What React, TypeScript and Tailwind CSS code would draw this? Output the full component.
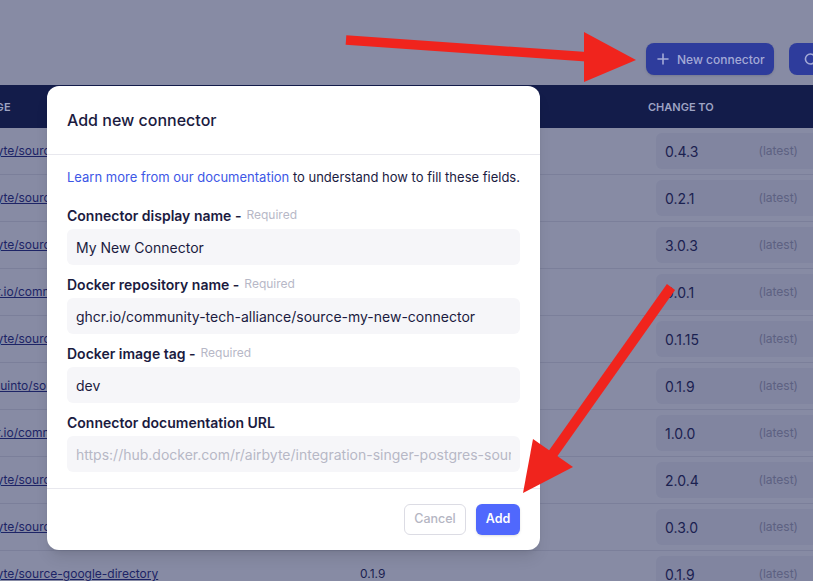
import React from "react";

const rows = [
  { repo: "airbyte/source-google-sheets", cur: "0.4.3", next: "0.4.3" },
  { repo: "airbyte/source-hubspot-crm", cur: "0.2.1", next: "0.2.1" },
  { repo: "airbyte/source-postgres-db", cur: "3.0.3", next: "3.0.3" },
  { repo: "ghcr.io/community-tech-alliance/source-x", cur: "0.0.1", next: "0.0.1" },
  { repo: "airbyte/source-stripe-api", cur: "0.1.15", next: "0.1.15" },
  { repo: "dmquinto/source-salesforce", cur: "0.1.9", next: "0.1.9" },
  { repo: "ghcr.io/community-tech-alliance/source-y", cur: "1.0.0", next: "1.0.0" },
  { repo: "airbyte/source-mailchimp", cur: "2.0.4", next: "2.0.4" },
  { repo: "airbyte/source-github-api", cur: "0.3.0", next: "0.3.0" },
  { repo: "airbyte/source-google-directory", cur: "0.1.9", next: "0.1.9" },
];

function Field({
  label,
  required,
  value,
  placeholder,
}: {
  label: string;
  required?: boolean;
  value?: string;
  placeholder?: string;
}) {
  return (
    <div className="flex flex-col gap-[4px]">
      <div className="h-[20px] flex items-center">
        <span className="text-[14px] font-semibold text-[#1b1b3f] whitespace-nowrap">
          {label}
          {required ? " -" : ""}
        </span>
        {required && <span className="text-[12px] text-[#b7b8c7] ml-[5px]">Required</span>}
      </div>
      <div className="h-[36px] rounded-[6px] bg-[#f6f6f9] flex items-center px-[9px]">
        <div className="overflow-hidden w-full">
          {value ? (
            <span className="text-[14px] text-[#1b1b3f] whitespace-nowrap">{value}</span>
          ) : (
            <span className="text-[14px] text-[#b7b8c6] whitespace-nowrap">{placeholder}</span>
          )}
        </div>
      </div>
    </div>
  );
}

export default function App() {
  return (
    <div
      className="relative w-[813px] h-[581px] overflow-hidden bg-[#878ba4]"
      style={{ fontFamily: "Inter, 'Noto Sans', sans-serif" }}
    >
      {/* top bar */}
      <div className="h-[85px] flex items-start pt-[43px] pl-[646px] gap-[15px]">
        <div className="shrink-0 w-[128px] h-[32px] rounded-[8px] bg-[#2e3c9c] flex items-center pl-[11px] gap-[8px] shadow-sm">
          <svg width="12" height="12" viewBox="0 0 12 12" className="shrink-0">
            <path d="M6 1v10M1 6h10" stroke="#a4aad6" strokeWidth="1.6" strokeLinecap="round" />
          </svg>
          <span className="text-[12px] font-medium text-[#a4aad6] whitespace-nowrap mt-[1px]">New connector</span>
        </div>
        <div className="shrink-0 w-[110px] h-[32px] rounded-[8px] bg-[#2e3c9c] flex items-center pl-[14px]">
          <svg width="14" height="14" viewBox="0 0 14 14">
            <path d="M11 3.5A5 5 0 1 0 11 10.5" stroke="#a4aad6" strokeWidth="1.6" fill="none" strokeLinecap="round" />
          </svg>
        </div>
      </div>

      {/* table */}
      <div className="ml-[-25px] w-[860px]">
        <div className="h-[43px] bg-[#131c4a] grid grid-cols-[385px_288px_1fr] items-center">
          <span className="text-[11px] font-semibold uppercase text-[#9ea3c3] tracking-[0.02em] -ml-[1px] pt-[1px]">
            Image
          </span>
          <span className="text-[11px] font-semibold uppercase text-[#9ea3c3] pt-[1px]">Current version</span>
          <span className="text-[11px] font-semibold uppercase text-[#9ea3c3] pt-[1px]">Change to</span>
        </div>
        {rows.map((r, i) => (
          <div
            key={i}
            className="h-[47px] grid grid-cols-[385px_288px_1fr] items-center border-b border-[#7b7f9a]"
          >
            <span className="text-[12px] text-[#1d2466] underline whitespace-nowrap">{r.repo}</span>
            <span className="text-[12px] text-[#1b2150]">{r.cur}</span>
            <div className="ml-[8px] w-[180px] h-[36px] rounded-[6px] bg-[#8185a0] flex items-center justify-between pl-[9px] pr-[38px]">
              <span className="text-[14px] text-[#1b2150]">{r.next}</span>
              <span className="text-[12px] text-[#5d6182]">(latest)</span>
            </div>
          </div>
        ))}
      </div>

      {/* modal */}
      <div className="absolute left-[47px] top-[86px] w-[493px] h-[464px] bg-white rounded-[12px] flex flex-col shadow-lg">
        <div className="h-[69px] shrink-0 px-[20px] flex items-center border-b border-[#e8e8ee]">
          <span className="text-[16px] font-medium text-[#1b1b3f]">Add new connector</span>
        </div>
        <div className="px-[20px] pt-[13px] flex flex-col">
          <p className="text-[13px] leading-[18px] text-[#1b1b3f] whitespace-nowrap">
            <span className="text-[#3d57e6]">Learn more from our documentation</span> to understand how to fill
            these fields.
          </p>
          <div className="mt-[19px] flex flex-col gap-[9px]">
            <Field label="Connector display name" required value="My New Connector" />
            <Field
              label="Docker repository name"
              required
              value="ghcr.io/community-tech-alliance/source-my-new-connector"
            />
            <Field label="Docker image tag" required value="dev" />
            <Field
              label="Connector documentation URL"
              placeholder="https://hub.docker.com/r/airbyte/integration-singer-postgres-source"
            />
          </div>
        </div>
        <div className="mt-auto h-[62px] border-t border-[#e8e8ee] flex items-center justify-end gap-[10px] px-[20px]">
          <div className="w-[62px] h-[31px] rounded-[6px] border border-[#dcdce4] flex items-center justify-center">
            <span className="text-[12.5px] font-medium text-[#b5b6c3]">Cancel</span>
          </div>
          <div className="w-[44px] h-[31px] rounded-[6px] bg-[#5068fd] flex items-center justify-center shadow-sm">
            <span className="text-[12.5px] font-semibold text-white">Add</span>
          </div>
        </div>
      </div>

      {/* annotation arrows */}
      <svg className="absolute inset-0 pointer-events-none" width="813" height="581" viewBox="0 0 813 581">
        <line x1="346" y1="40" x2="590" y2="57" stroke="#f0241d" strokeWidth="9.5" />
        <polygon points="584,32 636,60 584,82" fill="#f0241d" />
        <line x1="671" y1="287" x2="552" y2="455" stroke="#f0241d" strokeWidth="10" />
        <polygon points="533,439 573,467 523,493" fill="#f0241d" />
      </svg>
    </div>
  );
}
